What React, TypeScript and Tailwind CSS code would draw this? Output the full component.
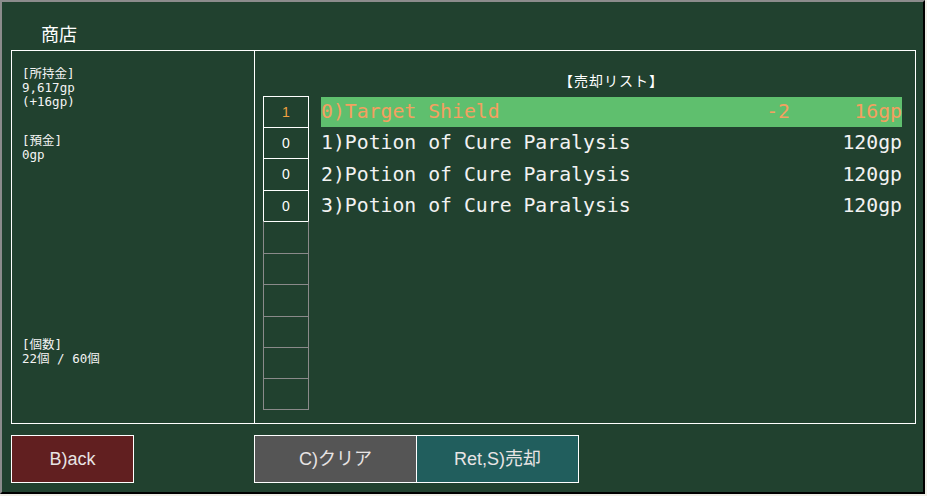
import React from "react";

const rowHeights = [31, 31, 32, 31, 32, 31, 32, 31, 31, 31];

const items = [
  { name: "0)Target Shield", qty: "-2", price: "16gp", sel: true, count: "1" },
  { name: "1)Potion of Cure Paralysis", qty: "", price: "120gp", sel: false, count: "0" },
  { name: "2)Potion of Cure Paralysis", qty: "", price: "120gp", sel: false, count: "0" },
  { name: "3)Potion of Cure Paralysis", qty: "", price: "120gp", sel: false, count: "0" },
];

const jp = { fontFamily: '"Noto Sans CJK JP", "Noto Sans", sans-serif' };
const mono = { fontFamily: '"DejaVu Sans Mono", "Liberation Mono", monospace' };
const monoJp = { fontFamily: '"DejaVu Sans Mono", "Noto Sans CJK JP", monospace' };
const sans = { fontFamily: '"Liberation Sans", "Noto Sans CJK JP", sans-serif' };

export default function App() {
  return (
    <div className="w-[927px] h-[496px] bg-[#f0efe8]">
      <div className="w-[925px] h-[494px] bg-[#21412f] border-t-2 border-l-2 border-r-2 border-b-2 border-t-[#8c8c8c] border-l-[#8c8c8c] border-r-black border-b-black flex flex-col">
        <div className="pt-[22px] pl-[39px] h-[48px] text-[18px] leading-[18px] text-white" style={jp}>
          商店
        </div>
        <div className="ml-[9px] w-[905px] h-[374px] border border-white flex">
          <div className="w-[243px] h-full border-r border-white pl-[10px] pt-[16px] text-[12.5px] leading-[14px] text-[#f4f4f4] flex flex-col whitespace-pre" style={monoJp}>
            <div>[所持金]</div>
            <div>9,617gp</div>
            <div>(+16gp)</div>
            <div className="mt-[25px]">[預金]</div>
            <div>0gp</div>
            <div className="mt-[176px]">[個数]</div>
            <div>22個 / 60個</div>
          </div>
          <div className="flex-1 flex flex-col">
            <div className="flex h-[45px]">
              <div className="w-[66px]" />
              <div className="w-[581px] pt-[22px] text-center text-[14px] leading-[14px] tracking-[1px] text-white" style={jp}>
                【売却リスト】
              </div>
            </div>
            <div className="flex">
              <div className="ml-[8px] w-[46px] flex flex-col">
                {rowHeights.map((h, i) => {
                  const white = i < 4;
                  const topWhite = i <= 4;
                  const it = items[i];
                  return (
                    <div
                      key={i}
                      className={
                        "flex items-center justify-center border-t border-x text-[14px] " +
                        (topWhite ? "border-t-white " : "border-t-[#8a8a8a] ") +
                        (white ? "border-x-white " : "border-x-[#8a8a8a] ") +
                        (i === rowHeights.length - 1 ? "border-b border-b-[#8a8a8a] " : "") +
                        (it && it.sel ? "text-[#f0a040]" : "text-white")
                      }
                      style={{ ...sans, height: h + (i === rowHeights.length - 1 ? 1 : 0) }}
                    >
                      {it ? it.count : ""}
                    </div>
                  );
                })}
              </div>
              <div className="ml-[12px] w-[581px] flex flex-col">
                {items.map((it, i) => (
                  <div key={i} className="pt-px" style={{ height: rowHeights[i] }}>
                    <div
                      className={
                        "h-full flex items-center text-[19.8px] leading-none whitespace-pre " +
                        (it.sel ? "bg-[#5fbf6e] text-[#f4a060]" : "text-[#f2f2f2]")
                      }
                      style={mono}
                    >
                      <div className="flex-1">{it.name}</div>
                      <div className="w-[60px] text-right">{it.qty}</div>
                      <div className="w-[112px] text-right">{it.price}</div>
                    </div>
                  </div>
                ))}
              </div>
            </div>
          </div>
        </div>
        <div className="mt-[11px] ml-[9px] flex h-[48px] text-[18px] text-[#e8e4e4]" style={sans}>
          <div className="w-[123px] h-full bg-[#611f20] border border-white flex items-center justify-center">
            B)ack
          </div>
          <div className="ml-[120px] w-[163px] h-full bg-[#555555] border border-white flex items-center justify-center">
            C)クリア
          </div>
          <div className="-ml-px w-[163px] h-full bg-[#215e5d] border border-white flex items-center justify-center">
            Ret,S)売却
          </div>
        </div>
      </div>
    </div>
  );
}
